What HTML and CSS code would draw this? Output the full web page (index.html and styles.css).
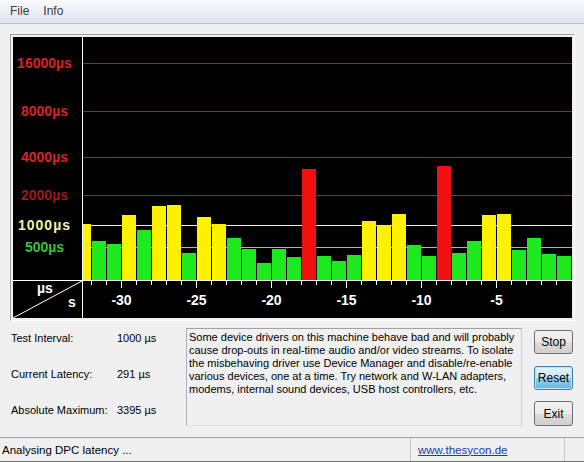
FILE: index.html
```html
<!DOCTYPE html>
<html>
<head>
<meta charset="utf-8">
<title>DPC Latency Checker</title>
<link rel="stylesheet" href="styles.css">
</head>
<body>
<div class="app">
  <div class="menubar"><span class="menu-item">File</span><span class="menu-item">Info</span></div>
  <div class="main">
    <div class="chart-frame">
      <div class="chart">
        <div class="ylabels">
          <span class="ylabel red" style="top:19px">16000µs</span>
          <span class="ylabel red" style="top:67px">8000µs</span>
          <span class="ylabel red" style="top:113px">4000µs</span>
          <span class="ylabel dark" style="top:151px">2000µs</span>
          <span class="ylabel cream wide" style="top:181px">1000µs</span>
          <span class="ylabel green" style="top:203px">500µs</span>
        </div>
        <div class="plot">
          <div class="gridline red" style="top:26px"></div>
          <div class="gridline red" style="top:74px"></div>
          <div class="gridline red" style="top:120px"></div>
          <div class="gridline red" style="top:158px"></div>
          <div class="gridline cream" style="top:188px"></div>
          <div class="gridline green" style="top:210px"></div>
          <div class="bars">
            <div class="bar y first" style="height:56px"></div>
            <div class="bar g" style="height:39px"></div>
            <div class="bar g" style="height:36px"></div>
            <div class="bar y" style="height:65px"></div>
            <div class="bar g" style="height:50px"></div>
            <div class="bar y" style="height:74px"></div>
            <div class="bar y" style="height:75px"></div>
            <div class="bar g" style="height:27px"></div>
            <div class="bar y" style="height:63px"></div>
            <div class="bar y" style="height:56px"></div>
            <div class="bar g" style="height:42px"></div>
            <div class="bar g" style="height:31px"></div>
            <div class="bar g" style="height:17px"></div>
            <div class="bar g" style="height:31px"></div>
            <div class="bar g" style="height:23px"></div>
            <div class="bar r" style="height:111px"></div>
            <div class="bar g" style="height:24px"></div>
            <div class="bar g" style="height:19px"></div>
            <div class="bar g" style="height:25px"></div>
            <div class="bar y" style="height:59px"></div>
            <div class="bar y" style="height:55px"></div>
            <div class="bar y" style="height:66px"></div>
            <div class="bar g" style="height:35px"></div>
            <div class="bar g" style="height:24px"></div>
            <div class="bar r" style="height:114px"></div>
            <div class="bar g" style="height:27px"></div>
            <div class="bar g" style="height:39px"></div>
            <div class="bar y" style="height:65px"></div>
            <div class="bar y" style="height:66px"></div>
            <div class="bar g" style="height:30px"></div>
            <div class="bar g" style="height:42px"></div>
            <div class="bar g" style="height:26px"></div>
            <div class="bar g" style="height:24px"></div>
          </div>
        </div>
        <div class="corner">
          <svg class="diag" width="69" height="37" viewBox="0 0 69 37"><line x1="0" y1="37" x2="69" y2="0" stroke="#fff" stroke-width="1"/></svg>
          <span class="unit-us">µs</span>
          <span class="unit-s">s</span>
        </div>
        <div class="xaxis">
          <div class="ticks">
            <span class="tick"></span><span class="tick"></span><span class="tick major"></span><span class="tick"></span><span class="tick"></span><span class="tick"></span><span class="tick"></span><span class="tick major"></span><span class="tick"></span><span class="tick"></span><span class="tick"></span><span class="tick"></span><span class="tick major"></span><span class="tick"></span><span class="tick"></span><span class="tick"></span><span class="tick"></span><span class="tick major"></span><span class="tick"></span><span class="tick"></span><span class="tick"></span><span class="tick"></span><span class="tick major"></span><span class="tick"></span><span class="tick"></span><span class="tick"></span><span class="tick"></span><span class="tick major"></span><span class="tick"></span><span class="tick"></span><span class="tick"></span><span class="tick"></span>
          </div>
          <div class="xlabels">
            <span class="xlabel">-30</span><span class="xlabel">-25</span><span class="xlabel">-20</span><span class="xlabel">-15</span><span class="xlabel">-10</span><span class="xlabel">-5</span>
          </div>
        </div>
      </div>
    </div>
    <div class="bottom">
      <div class="info">
        <span>Test Interval:</span><span>1000 µs</span>
        <span>Current Latency:</span><span>291 µs</span>
        <span>Absolute Maximum:</span><span>3395 µs</span>
      </div>
      <div class="message">Some device drivers on this machine behave bad and will probably<br>cause drop-outs in real-time audio and/or video streams. To isolate<br>the misbehaving driver use Device Manager and disable/re-enable<br>various devices, one at a time. Try network and W-LAN adapters,<br>modems, internal sound devices, USB host controllers, etc.</div>
      <div class="buttons">
        <button class="btn">Stop</button>
        <button class="btn focused">Reset</button>
        <button class="btn">Exit</button>
      </div>
    </div>
  </div>
  <div class="statusbar">
    <div class="status-text">Analysing DPC latency ...</div>
    <div class="status-link"><a href="#">www.thesycon.de</a></div>
    <div class="status-grip"></div>
  </div>
</div>
</body>
</html>
```
FILE: styles.css
```css
* { box-sizing: border-box; }
html, body { margin: 0; padding: 0; }
body {
  width: 584px;
  height: 462px;
  overflow: hidden;
  background: #f0f0f0;
  font-family: "Liberation Sans", Arial, sans-serif;
  color: #000;
}
.app { display: flex; flex-direction: column; height: 462px; }

.menubar {
  height: 24px;
  display: flex;
  align-items: center;
  padding: 0 0 1px 10px;
  background: linear-gradient(#f8fafd, #dfe4ee);
  border-bottom: 1px solid #b9bec9;
  font-size: 12px;
  color: #3c3c3c;
}
.menu-item { margin-right: 14px; }

.main { flex: 1; display: flex; flex-direction: column; }

.chart-frame {
  margin: 10px 0 0 10px;
  width: 565px;
  padding: 2px;
  border: 1px solid;
  border-color: #a0a0a0 #ffffff #ffffff #a0a0a0;
}
.chart {
  display: grid;
  grid-template-columns: 69px 489px;
  grid-template-rows: 243px 37px;
  gap: 1px;
  background: #fff;
}
.ylabels, .plot, .corner, .xaxis { background: #000; position: relative; }

.ylabel {
  position: absolute;
  left: 0;
  right: 6px;
  text-align: center;
  font-size: 14px;
  font-weight: bold;
  line-height: 14px;
}
.ylabel.red { color: #d82424; }
.ylabel.dark { color: #a01818; }
.ylabel.cream { color: #f2f0a8; }
.ylabel.wide { letter-spacing: 1px; }
.ylabel.green { color: #3cc03c; }

.gridline { position: absolute; left: 0; right: 0; height: 1px; }
.gridline.red { background: #b01c2c; }
.gridline.cream { background: #f0f0c8; }
.gridline.green { background: #98c498; }

.bars {
  position: relative;
  z-index: 1;
  height: 100%;
  display: flex;
  align-items: flex-end;
}
.bar { width: 14px; margin-right: 1px; flex: none; }
.bar.first { width: 8px; }
.bar.g { background: #1ee81e; }
.bar.y { background: #fff200; }
.bar.r { background: #f01010; }

.diag { display: block; }
.unit-us, .unit-s {
  position: absolute;
  color: #fff;
  font-size: 14px;
  font-weight: bold;
  line-height: 14px;
}
.unit-us { left: 24px; top: 0; }
.unit-s { left: 55px; top: 14px; }

.ticks { display: flex; padding-left: 8px; height: 7px; align-items: flex-start; }
.tick { width: 15px; flex: none; height: 4px; border-left: 1px solid #fff; }
.tick.major { height: 7px; }
.xlabels { display: flex; padding-left: 1px; margin-top: 5px; }
.xlabel {
  width: 75px;
  flex: none;
  text-align: center;
  color: #fff;
  font-size: 14px;
  font-weight: bold;
  line-height: 14px;
}

.bottom { display: flex; align-items: flex-start; }
.info {
  width: 186px;
  flex: none;
  padding: 10px 0 0 11px;
  display: grid;
  grid-template-columns: 106px auto;
  row-gap: 22px;
  font-size: 11px;
  line-height: 14px;
}
.message {
  width: 336px;
  height: 98px;
  margin-top: 7px;
  flex: none;
  border: 1px solid;
  border-color: #9fa2a8 #c9ccd2 #dfe3e8 #aeb1b7;
  padding: 2px 0 0 2px;
  font-size: 11px;
  line-height: 13px;
  background: #f0f0f0;
}
.buttons {
  margin-left: 12px;
  padding-top: 9px;
  display: flex;
  flex-direction: column;
}
.btn {
  width: 39px;
  height: 24px;
  margin-bottom: 12px;
  padding: 0;
  font-family: "Liberation Sans", Arial, sans-serif;
  font-size: 12px;
  color: #000;
  border: 1px solid #707070;
  border-radius: 3px;
  background: linear-gradient(#f2f2f2 0%, #ebebeb 50%, #dddddd 51%, #cfcfcf 100%);
}
.btn:last-child { margin-top: -1px; height: 25px; margin-bottom: 0; }
.btn.focused {
  border-color: #3c7fb1;
  background: linear-gradient(#e5f4fc 0%, #c4e5f6 50%, #98d1ef 51%, #68b3db 100%);
  box-shadow: inset 0 0 0 1px #bde6fd;
}

.statusbar {
  height: 25px;
  flex: none;
  display: flex;
  align-items: stretch;
  border-top: 1px solid #a0a0a0;
  font-size: 11.5px;
  border-bottom: 1px solid #707070;
}
.status-text { width: 410px; padding-left: 2px; display: flex; align-items: center; }
.status-link {
  width: 155px;
  border-left: 1px solid #c8c8c8;
  border-right: 1px solid #c8c8c8;
  padding-left: 7px;
  display: flex;
  align-items: center;
}
.status-link a { color: #1e3aa8; text-decoration: underline; }
.status-grip { flex: 1; }
```
